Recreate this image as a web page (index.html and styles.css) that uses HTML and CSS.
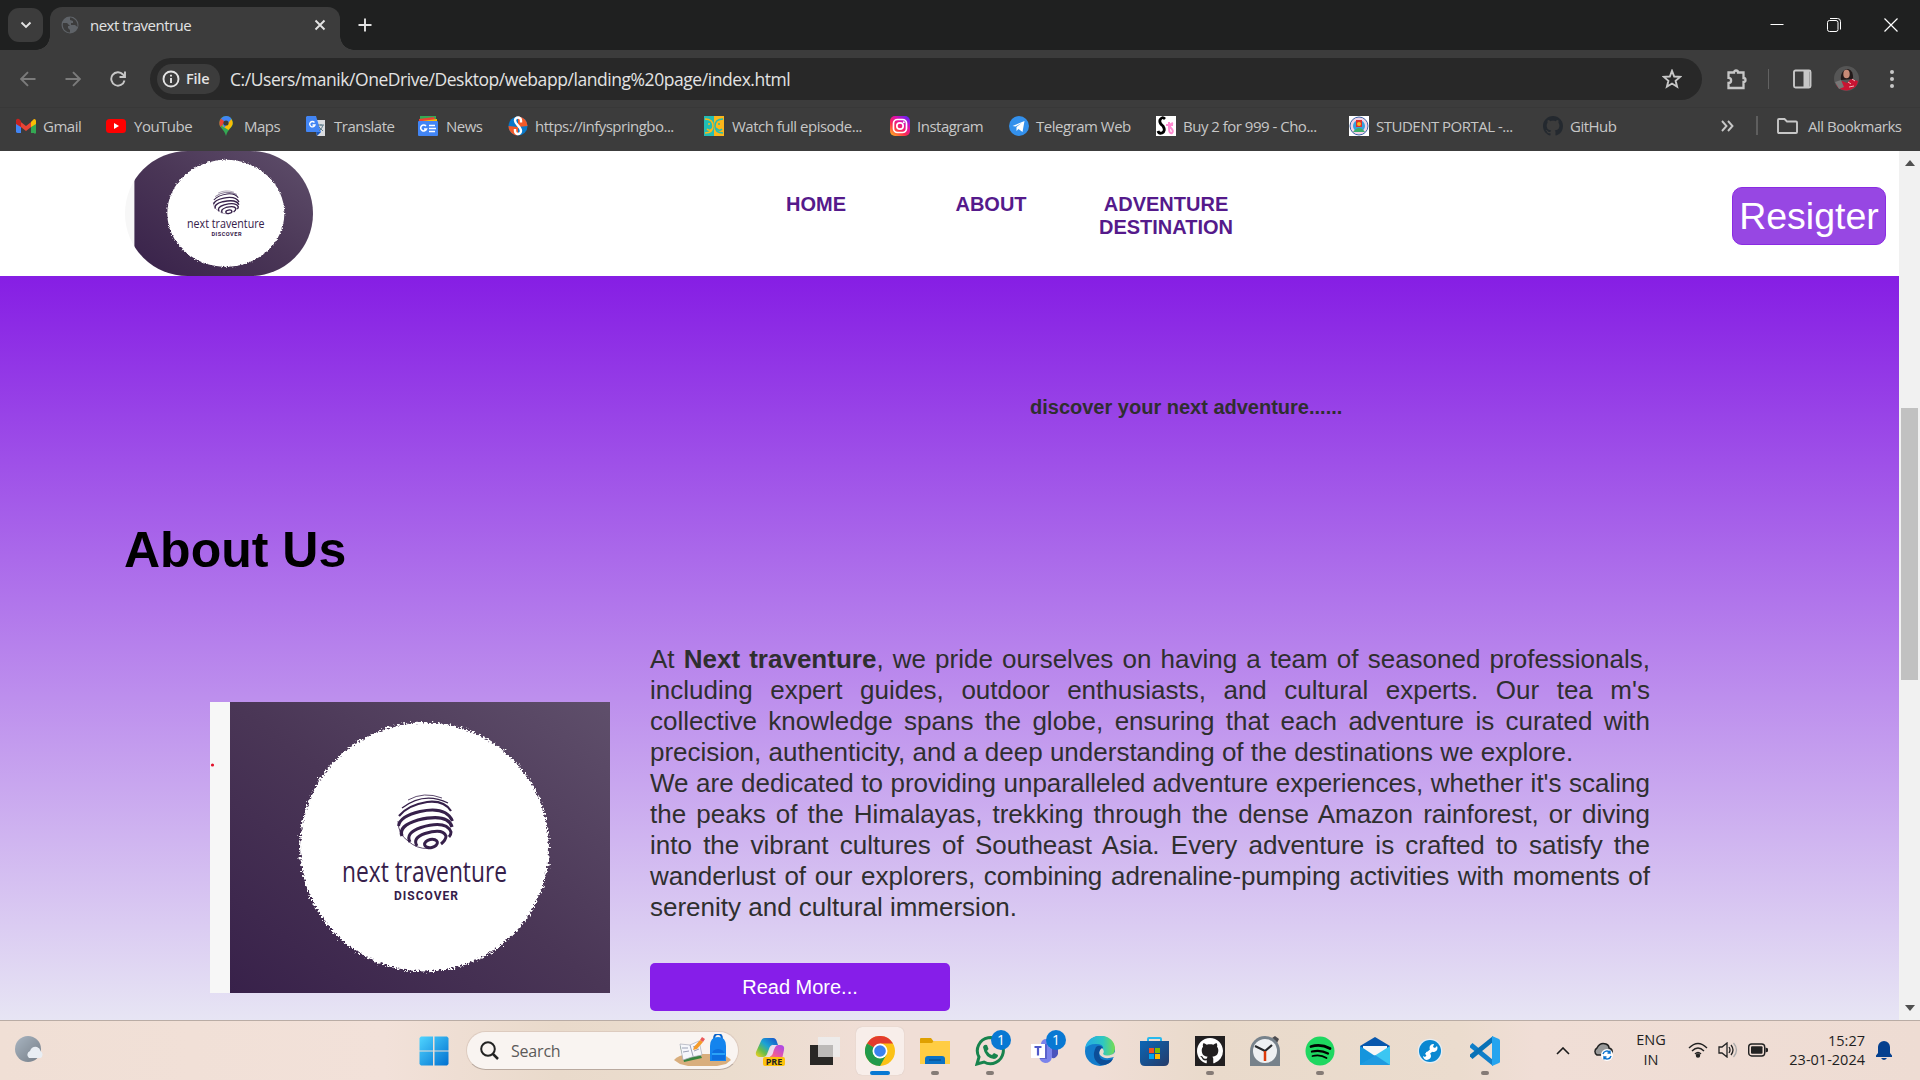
FILE: index.html
```html
<!DOCTYPE html>
<html lang="en">
<head>
<meta charset="utf-8">
<title>next traventrue</title>
<link rel="stylesheet" href="styles.css">
</head>
<body>
<svg class="defs" width="0" height="0" aria-hidden="true">
  <defs>
    <linearGradient id="plum" x1="0" y1="1" x2="1" y2="0"><stop offset="0" stop-color="#38214a"/><stop offset=".5" stop-color="#4a3656"/><stop offset="1" stop-color="#5f4f6b"/></linearGradient>
    <filter id="rough" x="-10%" y="-10%" width="120%" height="120%"><feTurbulence type="fractalNoise" baseFrequency=".45" numOctaves="3" seed="4"/><feDisplacementMap in="SourceGraphic" scale="9" xChannelSelector="R" yChannelSelector="G"/></filter>
    <linearGradient id="win" x1="0" y1="0" x2="1" y2="1"><stop offset="0" stop-color="#50d5ff"/><stop offset="1" stop-color="#0070d0"/></linearGradient>
    <linearGradient id="insta" x1="0" y1="1" x2=".8" y2="0"><stop offset="0" stop-color="#ffc21c"/><stop offset=".4" stop-color="#fb2d4d"/><stop offset=".7" stop-color="#e010a8"/><stop offset="1" stop-color="#6b22f5"/></linearGradient>
    <symbol id="brand" viewBox="0 0 400 291" preserveAspectRatio="none">
      <rect width="400" height="291" fill="#f7f7f7"/>
      <rect x="20" width="380" height="291" fill="url(#plum)"/>
      <circle cx="214.500" cy="145" r="124.500" fill="#fff" filter="url(#rough)"/>
      <circle cx="214.500" cy="145" r="123" fill="#fff"/>
      <g fill="none" stroke="#36204a">
        <path d="M198 98Q214 89 232 96" stroke-width=".8"/>
        <path d="M192 106Q214 89 238 101" stroke-width="1.300"/>
        <path d="M189 114Q198 103 217 100Q234 98 241 109" stroke-width="2.200"/>
        <path d="M188.500 124Q190 114 210 109.500Q236 104 242.500 119" stroke-width="2.900"/>
        <path d="M192 134Q188 124 208 118Q238 111 242 125" stroke-width="3.300"/>
        <path d="M200 140Q195 131 211 125.500Q236 118 241 130Q241 133 239 135" stroke-width="3"/>
        <path d="M207 144Q202 136 215 131.500Q233 126 236 134Q236 138 231 142" stroke-width="3"/>
        <ellipse cx="221" cy="141.500" rx="6.500" ry="4" transform="rotate(-12 221 141.500)" stroke-width="3"/>
        <path d="M188 119Q188 132 198 139Q207 147 218 146.500" stroke-width=".8"/>
      </g>
      <text x="132" y="180" class="brand-name" textLength="165" lengthAdjust="spacingAndGlyphs">next traventure</text>
      <text x="184" y="198" class="brand-sub" textLength="64">DISCOVER</text>
      <circle cx="2.500" cy="63" r="1.600" fill="#e2132b"/>
    </symbol>
    <symbol id="octo" viewBox="0 0 16 16"><path d="M8 0C3.58 0 0 3.58 0 8c0 3.540 2.290 6.530 5.470 7.590.4.070.550-.170.550-.380 0-.190-.010-.820-.010-1.490-2.010.370-2.530-.490-2.690-.940-.090-.230-.480-.940-.820-1.130-.280-.150-.680-.520-.010-.530.630-.010 1.080.580 1.230.820.720 1.210 1.870.870 2.330.660.070-.520.280-.870.510-1.070-1.780-.2-3.640-.890-3.640-3.950 0-.870.310-1.590.820-2.150-.080-.2-.360-1.020.080-2.120 0 0 .670-.210 2.200.820.640-.180 1.320-.270 2-.270s1.360.090 2 .270c1.530-1.040 2.200-.820 2.200-.820.440 1.100.160 1.920.080 2.120.510.560.820 1.270.820 2.150 0 3.070-1.870 3.750-3.650 3.950.290.250.540.730.540 1.480 0 1.070-.010 1.930-.010 2.200 0 .210.150.460.550.380A8.010 8.010 0 0 0 16 8c0-4.420-3.580-8-8-8z"/></symbol>
  </defs>
</svg>

<div class="window">
  <header class="tabstrip">
    <button class="tab-search"><svg width="12" height="8" viewBox="0 0 12 8"><path d="M1.500 1.500 6 6l4.500-4.500" class="line bright"/></svg></button>
    <div class="tab">
      <svg width="18" height="18" viewBox="0 0 18 18"><circle cx="9" cy="9" r="8.500" fill="#5f6368"/><path d="M2 7h4l3 3H7v2l2 2v2.500C4 16 1 12 2 7zM9 1.500V4l3 1v2h-2v2h4l2.500 2C17 6 14 2 9 1.500z" fill="#3c3c3c"/></svg>
      <span class="tab-title">next traventrue</span>
      <svg width="12" height="12" viewBox="0 0 12 12"><path d="m1.500 1.500 9 9m0-9-9 9" class="line bright"/></svg>
    </div>
    <svg class="new-tab" width="14" height="14" viewBox="0 0 14 14"><path d="M7 .5v13M.5 7h13" class="line bright"/></svg>
    <div class="window-controls">
      <svg width="14" height="14" viewBox="0 0 14 14"><path d="M.5 6.500h13" stroke="#fff"/></svg>
      <svg width="14" height="14" viewBox="0 0 14 14" fill="none" stroke="#fff"><rect x=".5" y="2.500" width="10.500" height="11" rx="2"/><path d="M3 .5h7.500a3 3 0 0 1 3 3v8"/></svg>
      <svg width="14" height="14" viewBox="0 0 14 14"><path d="m.5.5 13 13m0-13-13 13" stroke="#fff" stroke-width="1.200"/></svg>
    </div>
  </header>

  <div class="toolbar">
    <div class="nav-buttons">
      <svg width="16" height="16" viewBox="0 0 16 16"><path d="M15.500 8H1.500M8 1.200 1.200 8 8 14.800" class="line dim"/></svg>
      <svg width="16" height="16" viewBox="0 0 16 16"><path d="M.5 8h14M8 1.200 14.800 8 8 14.800" class="line dim"/></svg>
      <svg width="16" height="16" viewBox="0 0 16 16"><path d="M14.500 9.500A6.700 6.700 0 1 1 13 3.500L15 6M15 .5V6H9.500" class="line"/></svg>
    </div>
    <div class="omnibox">
      <span class="chip"><svg width="18" height="18" viewBox="0 0 18 18"><circle cx="9" cy="9" r="7.500" class="line bright"/><path d="M9 8v5M9 4.800v1.600" class="line bright"/></svg><span class="chip-text">File</span></span>
      <span class="url">C:/Users/manik/OneDrive/Desktop/webapp/landing%20page/index.html</span>
      <svg width="20" height="20" viewBox="0 0 20 20"><path d="m10 1.800 2.200 5.700 6 .4-4.600 3.900 1.500 5.900L10 14.500l-5.100 3.200 1.500-5.900L1.800 7.900l6-.4z" class="line"/></svg>
    </div>
    <svg class="puzzle" width="22" height="22" viewBox="0 0 22 22"><path d="M2.500 4.500h5.500a2 2 0 0 1 4 0h5.500v5.500a2 2 0 0 1 0 4v6h-15v-5a2.600 2.600 0 0 0 0-5.200z" class="line thick"/></svg>
    <i class="vline"></i>
    <svg class="panel" width="20" height="20" viewBox="0 0 20 20"><rect x="2" y="1.500" width="16.500" height="17" rx="1.500" class="line"/><path d="M11.500 1.500h6v17h-6z" fill="#c7c7c7"/></svg>
    <svg class="avatar" width="25" height="25" viewBox="0 0 25 25"><circle cx="12.500" cy="12.500" r="12.500" fill="#555"/><path d="M7 14C5 2 20-2 19 13z" fill="#231a1a"/><path d="M2 18l6-3 5 2 4-4 7 2q-1 8-11 9.500-9-.5-11-6.500z" fill="#c91432"/><ellipse cx="12.500" cy="8" rx="3.200" ry="4.300" fill="#c88a76"/><path d="m1 16 6-2 3 7-5 2z" fill="#777"/><path d="m14 16 3 2m1-5 3 2m-6 6 5-1" stroke="#f3b2b5"/></svg>
    <svg class="dots" width="4" height="20" viewBox="0 0 4 20" fill="#c7c7c7"><circle cx="2" cy="3" r="2"/><circle cx="2" cy="10" r="2"/><circle cx="2" cy="17" r="2"/></svg>
  </div>

  <nav class="bookmarks">
    <a class="snug"><svg viewBox="0 0 20 20"><path d="M0 4v12a2 2 0 0 0 2 1h3V8z" fill="#4285f4"/><path d="M18 3v14h-3V8l5-4v12a1 1 0 0 1-2 1z" fill="#34a853"/><path d="M1 3 10 10l9-7v5l-9 7L1 8z" fill="#ea4335"/><path d="M15 6l3-3a2 2 0 0 1 2 2v3l-5 3z" fill="#fbbc04"/><path d="M0 5q0-3 3-2l2 2v6L0 8z" fill="#c5221f"/></svg><span>Gmail</span></a>
    <a><svg viewBox="0 0 20 20"><rect y="3" width="20" height="14" rx="3.500" fill="#f00"/><path d="m8 7 5 3-5 3z" fill="#fff"/></svg><span>YouTube</span></a>
    <a><svg viewBox="0 0 20 20"><path d="M10 0a6.800 6.800 0 0 1 6.800 7c0 5-5.300 6-6.800 13C8.500 13 3.200 12 3.200 7A6.800 6.800 0 0 1 10 0z" fill="#34a853"/><path d="M16.500 5.500c1 4-2 6-4 8.500L6 10l8-8q2 1 2.500 3.500z" fill="#fbbc04"/><path d="M10 0q4 0 5.500 3L8 12 5 2.500Q7 0 10 0z" fill="#4285f4"/><path d="M5 2.500 9 6l-4.500 5Q2 7 5 2.500z" fill="#ea4335"/><circle cx="10" cy="7" r="2.600" fill="#3c3c3c"/></svg><span>Maps</span></a>
    <a><svg viewBox="0 0 20 20"><path d="M8 4h11v16H11z" fill="#dadce0"/><path d="M1 0h9l5 16H1a1 1 0 0 1-1-1V1z" fill="#4285f4"/><path d="m10 16 1 4 4-4z" fill="#1a56b8"/><path d="M12 9h6M15 8v2m2-1q-1 4-4 6m0-4 4 4" stroke="#607d8b" fill="none"/><path d="M8.500 6.500A2.700 2.700 0 1 0 9 9H6.500" fill="none" stroke="#fff" stroke-width="1.300"/></svg><span>Translate</span></a>
    <a><svg viewBox="0 0 20 20"><path d="M2 0h16v6H2z" fill="#34a853"/><path d="m1 3 15-2 2 5H1z" fill="#ea4335"/><path d="m4 5 15-2v3H4z" fill="#fbbc04"/><rect y="5" width="20" height="15" rx="1" fill="#4285f4"/><path d="M8 10a3 3 0 1 0 .5 3H6M11 9.500h6m-6 3h7m-7 3h6" fill="none" stroke="#fff" stroke-width="1.600"/></svg><span>News</span></a>
    <a class="snug"><svg viewBox="0 0 20 20"><circle cx="10" cy="10" r="9.500" fill="#0878c9"/><path d="M10 .5a9.500 9.500 0 0 1 9.500 9.500L10 11zM.5 10a9.500 9.500 0 0 0 9.500 9.500V11z" fill="#f15a29"/><path d="M13 6.500V4.500a3 3 0 0 0-6 0c0 4 6 6 6 10.500a3 3 0 0 1-6 0v-2" fill="none" stroke="#fff" stroke-width="2.400"/></svg><span>https://infyspringbo...</span></a>
    <a><svg viewBox="0 0 20 20"><path d="M0 0h10v20H0z" fill="#22bdb5"/><path d="M10 0h10v20H10z" fill="#fcb71b"/><path d="M1 3q8 0 8 7t-8 7M3 13q3 3 6-1" fill="none" stroke="#fcb71b" stroke-width="1.500"/><path d="M19 3q-8 0-8 7t8 7m-7-5q3 4 6 1" fill="none" stroke="#22bdb5" stroke-width="1.500"/><circle cx="5" cy="8" r="1" fill="#fcb71b"/><circle cx="15" cy="8" r="1" fill="#22bdb5"/></svg><span>Watch full episode...</span></a>
    <a class="snug"><svg viewBox="0 0 20 20"><rect width="20" height="20" rx="5" fill="url(#insta)"/><g fill="none" stroke="#fff" stroke-width="1.700"><rect x="3.500" y="3.500" width="13" height="13" rx="4"/><circle cx="10" cy="10" r="3.200"/></g><circle cx="13.800" cy="6.200" r="1" fill="#fff"/></svg><span>Instagram</span></a>
    <a class="snug"><svg viewBox="0 0 20 20"><circle cx="10" cy="10" r="10" fill="#3390ec"/><path d="m3.500 10 12-5-2 11-4-3-2 2v-4l5-4-6 3.500z" fill="#fff"/></svg><span>Telegram Web</span></a>
    <a class="snug"><svg viewBox="0 0 20 20"><path d="M0 0h20v20H0z" fill="#fff"/><path d="M9 3Q6 0 4 4q-1 3 3 6 3 5-1 7-3 1-4-2" fill="none" stroke="#000" stroke-width="2.800"/><path d="M13 6v6q0 6 3 5 2-2-1-5-3-3 2-5M10 9h7" fill="none" stroke="#ff8bd2" stroke-width="2"/></svg><span>Buy 2 for 999 - Cho...</span></a>
    <a class="snug"><svg viewBox="0 0 20 20"><path d="M0 0h20v20H0z" fill="#fff"/><circle cx="10" cy="10" r="9" fill="#f2d4e7" stroke="#3a63a8"/><circle cx="10" cy="10" r="6" fill="#36a1df"/><path d="M7 4h6v7H7z" fill="#dc3030"/><circle cx="10" cy="8" r="2" fill="#fbb81d"/><path d="M4 16q6-8 12 0z" fill="#3cae6b"/></svg><span>STUDENT PORTAL -...</span></a>
    <a class="snug"><svg viewBox="0 0 20 20" fill="#24292f"><use href="#octo" width="20" height="20"/></svg><span>GitHub</span></a>
    <svg class="more" width="13" height="12" viewBox="0 0 13 12"><path d="m1 1 4.500 5L1 11M7 1l4.500 5L7 11" class="line"/></svg>
    <i class="vline"></i>
    <a><svg class="folder" viewBox="0 0 21 20"><path d="M2 3h5.500l2.500 2.500h9q1 0 1 1V16q0 1-1 1H2q-1 0-1-1V4q0-1 1-1z" class="line"/></svg><span>All Bookmarks</span></a>
  </nav>

  <div class="viewport">
    <main class="page">
      <header class="site-header">
        <svg class="site-logo"><use href="#brand" width="188" height="125"/></svg>
        <nav class="site-nav"><a>HOME</a><a>ABOUT</a><a>ADVENTURE DESTINATION</a></nav>
        <button class="register">Resigter</button>
      </header>
      <section class="hero">
        <p class="tagline">discover your next adventure......</p>
        <h1>About Us</h1>
        <div class="about">
          <svg class="about-image"><use href="#brand" width="400" height="291"/></svg>
          <div class="about-text">
            <p>At <b>Next traventure</b>, we pride ourselves on having a team of seasoned professionals, including expert guides, outdoor enthusiasts, and cultural experts. Our tea m's collective knowledge spans the globe, ensuring that each adventure is curated with precision, authenticity, and a deep understanding of the destinations we explore.</p>
            <p>We are dedicated to providing unparalleled adventure experiences, whether it's scaling the peaks of the Himalayas, trekking through the dense Amazon rainforest, or diving into the vibrant cultures of Southeast Asia. Every adventure is crafted to satisfy the wanderlust of our explorers, combining adrenaline-pumping activities with moments of serenity and cultural immersion.</p>
            <button class="read-more">Read More...</button>
          </div>
        </div>
      </section>
    </main>
    <div class="scrollbar">
      <svg width="10" height="6" viewBox="0 0 10 6"><path d="M0 6 5 0l5 6z" fill="#505050"/></svg>
      <i class="thumb"></i>
      <svg width="10" height="6" viewBox="0 0 10 6"><path d="m0 0 5 6 5-6z" fill="#505050"/></svg>
    </div>
  </div>

  <footer class="taskbar">
    <svg class="weather" width="30" height="30" viewBox="0 0 30 30"><defs><linearGradient id="moon" x1="0" y1="0" x2="1" y2="1"><stop offset="0" stop-color="#a9b5c1"/><stop offset="1" stop-color="#757e88"/></linearGradient></defs><circle cx="14" cy="14" r="13" fill="url(#moon)"/><path d="M15 23a4 4 0 0 1 1-7q2-5 7-4 3 1 3.500 4a4 4 0 0 1 0 7z" fill="#e9eef4"/></svg>
    <svg class="start" width="30" height="30" viewBox="0 0 30 30" fill="url(#win)"><path d="M2 .5h12v14H.5V2zM15.500.5H28L29.500 2v12.500h-14zM.5 15.500H14v14H2L.5 28zM15.500 15.500h14V28L28 29.500H15.500z"/></svg>
    <div class="search">
      <svg width="19" height="19" viewBox="0 0 19 19"><circle cx="8" cy="8" r="6.800" fill="none" stroke="#222" stroke-width="2"/><path d="m13 13 5 5" stroke="#222" stroke-width="2.500"/></svg>
      <span>Search</span>
      <svg class="school" width="58" height="34" viewBox="0 0 58 34"><path d="M0 26q4-5 15-6h30q9 2 12 6l-5 4-9 2H14l-8-2z" fill="#d9ae7d"/><path d="m6 12 4 16 18-4-2-4z" fill="#37843e"/><path d="m6 10 10 1 9-4 3 14-10 2-9 3z" fill="#f6f7fb" stroke="#a7aab8" stroke-width=".7"/><path d="m16 11 3 11M8 14l6 0m-5 4 6-1m4-4 5-2m-4 6 5-2" stroke="#9aa0b5"/><path d="m20 13 6-7 3 2-6 7-4 1z" fill="#f59b28"/><path d="m26 6 2-3 3 2-2 3z" fill="#eb5a5a"/><path d="M40 5q0-5 4-5t4 5" fill="none" stroke="#0a63c9" stroke-width="2"/><path d="M36 27V12q0-9 8-9t8 9v15z" fill="#1484ee"/><path d="M38 26v-5q0-6 6-6t7 6v5z" fill="#0d6fe0"/><path d="M38 20h13" stroke="#34b3ff" stroke-width="1.500"/></svg>
    </div>
    <div class="apps">
      <span class="app"><svg viewBox="0 0 30 30"><defs><linearGradient id="cp1" x1="1" y1="0" x2="0" y2="1"><stop offset="0" stop-color="#174ac9"/><stop offset=".45" stop-color="#1ba4d5"/><stop offset=".7" stop-color="#68bd49"/><stop offset="1" stop-color="#ffd21d"/></linearGradient><linearGradient id="cp2" x1="1" y1="0" x2="0" y2="1"><stop offset="0" stop-color="#a247f2"/><stop offset=".6" stop-color="#ef5a9b"/><stop offset="1" stop-color="#ff9843"/></linearGradient></defs><path d="M6 5q1-3 4-3h8q3 0 4 4l1 3h-5q-3 0-4 4l-2 5q-1 3-4 3H4q-4-1-3-5z" fill="url(#cp1)"/><path d="M17 9h8q5 0 4 5l-2 9H11q4 0 5-5z" fill="url(#cp2)"/><path d="M12 21q5-14 6-12h5q-3 0-5 8-1 4-6 4z" fill="#eadcf0"/></svg><b class="pre">PRE</b></span>
      <span class="app"><svg viewBox="0 0 30 30"><path d="M0 9h23v20H0z" fill="#292826"/><path d="M8 1h22v20H8z" fill="#ececec" opacity=".9"/><path d="M8 9h15v12H8z" fill="#bcbab8"/></svg></span>
      <span class="app active"><svg viewBox="0 0 30 30"><circle cx="15" cy="15" r="15" fill="#fbc116"/><path d="M15 15 2 7.500A15 15 0 0 1 28 7.500H15z" fill="#e33b2e"/><path d="M2 7.500A15 15 0 0 0 15 30l6.500-11.500L15 15z" fill="#229a4b"/><circle cx="15" cy="15" r="7.500" fill="#fff"/><circle cx="15" cy="15" r="5.800" fill="#3b82ee"/></svg></span>
      <span class="app open"><svg viewBox="0 0 30 30"><path d="M0 3q0-1 1-1h10l3 4v4H0z" fill="#dfa000"/><path d="M0 7h12l2-2h16v23H0z" fill="#ffcd43"/><path d="M5 28v-5q0-3 3-3h14q3 0 3 3v5z" fill="#0b72c5"/><path d="M9 24h12" stroke="#084b8a" stroke-width="1.200"/></svg></span>
      <span class="app open"><svg viewBox="0 0 30 30"><path d="M2 28 4 21A13 13 0 1 1 9 26z" fill="none" stroke="#17834d" stroke-width="3"/><path d="M8 11q1-3 4-2l1.500 4-1.500 2q2 3 5 4l2-2 4 2q0 3-4 4Q10 22 8 11z" fill="#17834d"/></svg><b class="badge">1</b></span>
      <span class="app"><svg viewBox="0 0 30 30"><circle cx="16" cy="8" r="5" fill="#7b83eb"/><path d="M20 10h8v8q-2 5-6 4z" fill="#4b53bc"/><path d="M9 12h13v9q-1 6-7 6-5-1-6-6z" fill="#7b83eb"/><path d="M2 8h15v15H10v-1H2z" fill="#464eb8" opacity=".6"/><path d="M1 8h14v14H1z" fill="#fff"/><path d="M4.500 11h7M8 11v8.500" stroke="#5059c9" stroke-width="2.200"/></svg><b class="badge">1</b></span>
      <span class="app"><svg viewBox="0 0 30 30"><defs><linearGradient id="edge1"><stop offset="0" stop-color="#25a9e8"/><stop offset=".6" stop-color="#2ec7c1"/><stop offset="1" stop-color="#75dd50"/></linearGradient></defs><circle cx="15" cy="15" r="15" fill="#137ccb"/><path d="M0 13C2-5 29-4 30 12q0 8-9 8-5-1-4-4 4-8-6-8Q3 8 0 13z" fill="url(#edge1)"/><path d="M11 11q-6 12 5 18 9 0 12-6-13 4-14-5 0-5 4-6-3-4-7-1z" fill="#0c4e98"/><path d="M17 12q-4 3-2 7 4 5 14 2l2-2V15l-3 3q-7 3-10 0 2-3-1-6z" fill="#eadccf"/></svg></span>
      <span class="app"><svg viewBox="0 0 30 30"><defs><linearGradient id="store" x1="0" y1="0" x2="1" y2="1"><stop offset="0" stop-color="#0a66b6"/><stop offset="1" stop-color="#253b69"/></linearGradient></defs><path d="M8 7V3q0-1 1-1h11q1 0 1 1v4" fill="none" stroke="#28b9ed" stroke-width="2"/><path d="M0 5h29v20q0 5-5 5H5q-5 0-5-5z" fill="url(#store)"/><path d="M9 12h5v5H9z" fill="#f25022"/><path d="M15 12h5v5h-5z" fill="#7fba00"/><path d="M9 18h5v5H9z" fill="#00a4ef"/><path d="M15 18h5v5h-5z" fill="#ffb900"/></svg></span>
      <span class="app open"><svg viewBox="0 0 30 30"><path d="M0 0h30v30H0z" fill="#211f20"/><use href="#octo" x="2" y="2" width="26" height="26" fill="#fff"/></svg></span>
      <span class="app"><svg viewBox="0 0 30 30"><path d="M22 2l3-2 4 3-2 4z" fill="#4c4c50"/><path d="M0 30V15a15 15 0 0 1 30 0v15z" fill="#77828b"/><circle cx="15" cy="15" r="12" fill="#eef0f2"/><path d="m5 10 10 5 7-6" fill="none" stroke="#26282b" stroke-width="2.200"/><path d="M15 15v10" stroke="#dc3b0b" stroke-width="2.500"/></svg></span>
      <span class="app open"><svg viewBox="0 0 30 30"><circle cx="15" cy="15" r="14.500" fill="#1ed760"/><g fill="none" stroke="#000" stroke-linecap="round"><path d="M6 10.500q10-3 19 2" stroke-width="2.800"/><path d="M7 15.500q9-2 16 2" stroke-width="2.300"/><path d="M7.500 20q8-2 14 2" stroke-width="1.800"/></g></svg></span>
      <span class="app"><svg viewBox="0 0 30 30"><path d="M0 10 15 1l15 9v7H0z" fill="#0757ad"/><path d="M3 10h24v10H3z" fill="#f7f7f7"/><path d="m0 10 15 10v9H0z" fill="#1595dd"/><path d="M30 10v19H0z" fill="#3bc6f2"/><path d="m15 19 15 10H0z" fill="#1488d8" opacity=".7"/></svg></span>
      <span class="app"><svg viewBox="0 0 30 30"><circle cx="15" cy="15" r="12.300" fill="#e5eef5"/><circle cx="15" cy="15" r="11" fill="#0a88d1"/><path d="m11 19 7-6" stroke="#fff" stroke-width="3"/><path d="M22 10a4 4 0 1 1-3-2l-1 3 2 1zM8 20a4 4 0 1 0 3-4l1 3-2 2z" fill="#fff"/></svg></span>
      <span class="app open"><svg viewBox="0 0 30 30"><path d="M0 9.500 2.500 7 23 24v6L0 11.500z" fill="#117fc9"/><path d="M0 20.500 2.500 23 23 6V0L0 18.500z" fill="#0871b6"/><path d="m22 0 7 3q1 .5 1 1.500v21q0 1-1 1.500l-7 3z" fill="#25a4ef"/></svg></span>
    </div>
    <svg class="chevron" width="14" height="8" viewBox="0 0 14 8"><path d="m1 7 6-6 6 6" fill="none" stroke="#1b1b1b" stroke-width="1.600"/></svg>
    <svg class="cloud" width="22" height="20" viewBox="0 0 22 20"><path d="M5 14a4 4 0 0 1 0-7q3-6 9-4 3 1 3 4 4 1 3 5-1 2-4 2z" fill="#999" stroke="#222" stroke-width="1.500"/><circle cx="15" cy="14" r="6" fill="#fff"/><path d="M11 13a4 4 0 0 1 7-1.500V9.500m0 2.500h-2.500M19 15a4 4 0 0 1-7 1.500v2m0-2.500h2.500" fill="none" stroke="#0870cc" stroke-width="1.400"/></svg>
    <div class="language"><span>ENG</span><span>IN</span></div>
    <div class="tray">
      <svg width="20" height="16" viewBox="0 0 20 16" fill="none" stroke="#222" stroke-width="1.400"><path d="M1 6q9-9 18 0M4 9q6-6 12 0M7 12q3-3 6 0"/><circle cx="10" cy="13.500" r="1.500" fill="#222"/></svg>
      <svg width="20" height="16" viewBox="0 0 20 16" fill="none" stroke="#222" stroke-width="1.300"><path d="M1 5h3l5-4v14l-5-4H1zM11 5q2 3 0 6m2-8q4 5 0 10"/><path d="M15.500 1q6 7 0 14" stroke="#aaa"/></svg>
      <svg width="20" height="14" viewBox="0 0 20 14"><rect x=".7" y="1" width="16" height="12" rx="3" fill="none" stroke="#222" stroke-width="1.400"/><rect x="3" y="3.200" width="11.500" height="7.600" rx="1" fill="#222"/><path d="M17.500 4.500 20 5.500v3l-2.500 1z" fill="#222"/></svg>
    </div>
    <div class="clock"><span>15:27</span><span>23-01-2024</span></div>
    <svg class="bell" width="18" height="20" viewBox="0 0 18 20"><path d="M9 0a6 6 0 0 1 6 6v6l2 2.500V16H1v-1.500L3 12V6a6 6 0 0 1 6-6zM6 17h6q-3 4-6 0z" fill="#04408f"/></svg>
  </footer>
</div>
</body>
</html>
```
FILE: styles.css
```css
* { box-sizing: border-box; }
body { margin: 0; font-family: "Liberation Sans", Arial, sans-serif; }
button { border: 0; padding: 0; font-family: inherit; }
p, h1 { margin: 0; }
svg { display: block; flex: none; }
.defs { position: absolute; }
.line { fill: none; stroke: #c7c7c7; stroke-width: 1.9; }
.thick { stroke-width: 2.3; }
.bright { stroke: #e3e3e3; }
.dim { stroke: #7b7b7b; }

.window { width: 1920px; height: 1080px; overflow: hidden; display: flex; flex-direction: column; background: #3c3c3c; }
.window > * { flex: none; }

/* Tab strip */
.tabstrip { height: 50px; display: flex; align-items: center; background: #1f2020; color: #e3e3e3; padding-left: 8px; font: 15px "Open Sans", sans-serif; }
.tab-search { width: 35px; height: 34px; border-radius: 11px; background: #3c3c3c; display: grid; place-items: center; position: relative; z-index: 1; }
.tab { width: 290px; height: 43px; margin: 7px 0 0 7px; padding: 0 14px 7px 11px; display: flex; align-items: center; gap: 11px; background: #3c3c3c; border-radius: 12px 12px 0 0; position: relative; }
.tab::before, .tab::after { content: ""; position: absolute; bottom: 0; width: 14px; height: 14px; }
.tab::before { left: -14px; background: radial-gradient(circle at 0 0, #1f2020 13.5px, #3c3c3c 14px); }
.tab::after { right: -14px; background: radial-gradient(circle at 100% 0, #1f2020 13.5px, #3c3c3c 14px); }
.tab-title { flex: 1; letter-spacing: -.5px; }
.new-tab { margin-left: 18px; }
.window-controls { margin-left: auto; display: flex; gap: 43px; padding-right: 22px; }

/* Toolbar */
.toolbar { height: 57px; display: flex; align-items: center; background: #3c3c3c; }
.nav-buttons { display: flex; gap: 29px; padding-left: 20px; width: 150px; }
.omnibox { width: 1552px; height: 42px; border-radius: 21px; background: #282828; display: flex; align-items: center; padding: 0 20px 0 7px; }
.chip { width: 63px; height: 30px; border-radius: 15px; background: #3c3c3c; display: flex; align-items: center; gap: 6px; padding-left: 5px; color: #e3e3e3; }
.chip-text { font: 600 14.5px "Open Sans", sans-serif; letter-spacing: -.2px; }
.url { flex: 1; padding-left: 10px; color: #e3e3e3; font: 17.5px "Open Sans", sans-serif; letter-spacing: -.44px; }
.puzzle { margin-left: 24px; }
.toolbar .vline { width: 1px; height: 20px; margin-left: 20px; background: #626262; }
.panel { margin-left: 23px; }
.avatar { margin-left: 22px; }
.dots { margin-left: 31px; }

/* Bookmarks bar */
.bookmarks { height: 44px; display: grid; grid-template-columns: 90px 110px 90px 112px 90px 196px 186px 119px 147px 193px 194px 178px 35px 21px 130px; align-items: center; padding: 0 0 8px 16px; border-top: 1px solid #383838; color: #c7c7c7; font: 15px "Open Sans", sans-serif; letter-spacing: -.5px; white-space: nowrap; }
.bookmarks a { display: flex; align-items: center; gap: 8px; }
.bookmarks .snug { gap: 7px; }
.bookmarks a svg { width: 20px; height: 20px; }
.bookmarks a .folder { width: 21px; margin-right: 2px; }
.bookmarks .vline { width: 2px; height: 19px; background: #5e5e5e; }

/* Browser viewport */
.viewport { height: 869px; display: flex; }
.page { width: 1899px; height: 869px; overflow: hidden; }
.scrollbar { width: 21px; background: #f1f1f1; display: flex; flex-direction: column; align-items: center; justify-content: space-between; padding: 9px 0; }
.thumb { width: 17px; height: 272px; background: #c1c1c1; margin-top: -83px; }

/* Site */
.site-header { height: 125px; background: #fff; display: flex; align-items: flex-start; padding: 0 13px 0 125px; }
.site-logo { width: 188px; height: 125px; border-radius: 62.5px; }
.site-nav { display: flex; margin-left: 415.5px; padding-top: 42px; }
.site-nav a { width: 175px; padding: 0 18px; text-align: center; font-size: 20px; font-weight: bold; line-height: 23px; color: #551a8b; }
.register { width: 154px; height: 58px; margin: 36px 0 0 auto; border: 1px solid #8a2be2; border-radius: 10px; background: #9747e3; color: #fff; font-size: 37.5px; }
.hero { height: 744px; padding: 119px 0 0 125px; background: linear-gradient(#861ee4, #e7e5f4); color: #2f2f2f; }
.tagline { margin-left: 905px; font-size: 20px; line-height: 24px; font-weight: bold; }
h1 { margin: 101px 0 0 -1px; font-size: 50px; line-height: 60px; color: #000; }
.about { display: flex; align-items: flex-start; margin: 64px 0 0 85px; gap: 40px; }
.about-image { width: 400px; height: 291px; margin-top: 58px; }
.about-text { width: 1000px; }
.about-text p { font-size: 26px; line-height: 31px; text-align: justify; }
.read-more { display: block; width: 300px; height: 48px; margin-top: 40px; border-radius: 5px; background: #861ee9; color: #fff; font-size: 20px; }
.brand-name { font: 30px "Open Sans", sans-serif; fill: #36204a; }
.brand-sub { font: bold 12px "Roboto", sans-serif; fill: #36204a; }

/* Taskbar */
.taskbar { height: 60px; display: flex; align-items: center; border-top: 1px solid #b9aca5; background: linear-gradient(90deg, #f0dfd5 0, #f2e1d9 20%, #e9dacb 29%, #ebddce 38%, #f0ded6 45%, #f0ded6 57%, #e9dacb 63%, #ebdcce 76%, #f0ded6 80%, #eedcd3 100%); color: #1f1f1f; font: 15px "Open Sans", sans-serif; }
.weather { margin-left: 14px; margin-bottom: 2px; }
.start { margin-left: 375px; }
.search { width: 273px; height: 39px; margin-left: 17px; border-radius: 20px; background: #f9f4f1; border: 1px solid #ddcbbf; border-bottom-color: #b9a99f; display: flex; align-items: center; padding: 0 6px 0 13px; color: #5c5a59; font-size: 16px; }
.search span { margin-left: 12px; letter-spacing: -.2px; }
.school { margin-left: auto; }
.apps { display: flex; gap: 7px; margin-left: 7px; }
.app { width: 48px; height: 48px; display: grid; place-items: center; border-radius: 6px; position: relative; }
.app svg { width: 30px; height: 30px; }
.active { background: #f8eeea; box-shadow: 0 0 1px #c4b4ac; }
.open::after, .active::after { content: ""; position: absolute; bottom: 0; left: 20px; width: 8px; height: 4px; border-radius: 2px; background: #857b76; }
.active::after { left: 14px; width: 20px; background: #0878d3; }
.badge { position: absolute; left: 25px; top: 3px; width: 20px; height: 20px; border-radius: 50%; background: #0878d3; color: #fff; font: 14px/20px "Open Sans", sans-serif; text-align: center; }
.pre { position: absolute; left: 17px; top: 30px; width: 22px; height: 9px; border-radius: 2px; background: #fdc20c; color: #222; font: bold 9px/9px "Open Sans", sans-serif; text-align: center; }
.chevron { margin-left: 47px; }
.cloud { margin-left: 22px; }
.language { width: 40px; margin-left: 17px; display: grid; text-align: center; font-size: 14.5px; line-height: 20px; padding-bottom: 1px; }
.tray { display: flex; align-items: center; gap: 10px; margin-left: 17px; padding-bottom: 1px; }
.clock { display: grid; width: 97px; text-align: right; font-size: 14.5px; line-height: 19.5px; padding-bottom: 1px; }
.bell { margin-left: 10px; }
```
